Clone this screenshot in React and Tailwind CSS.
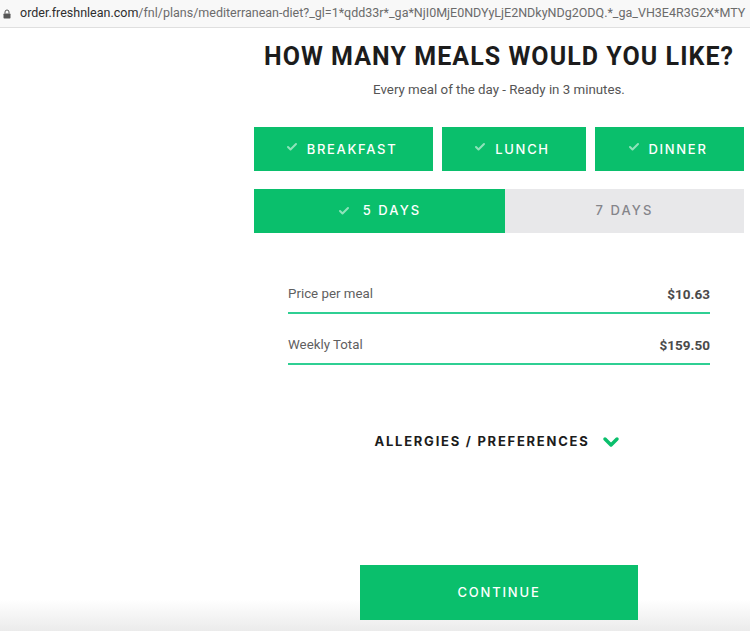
import { Check, ChevronDown } from "lucide-react";

const MealButton = ({ label, className }) => (
  <div className={`h-11 bg-[#0abf6c] flex items-center justify-center gap-[9px] pr-[4px] text-white text-[13px] font-medium tracking-[0.13em] font-['Inter',sans-serif] ${className}`}>
    <Check className="w-3 h-3 text-[#8fe3bb] -mt-1" strokeWidth={4} />
    <span className="mt-[1px]">{label}</span>
  </div>
);

const PriceRow = ({ label, value }) => (
  <div className="h-[31px] pt-[1px] flex items-start justify-between border-b-2 border-[#2fcf93]">
    <span className="text-[13.3px] leading-[20px] text-[#5f5f5f]">{label}</span>
    <span className="text-[13.5px] leading-[20px] font-bold text-[#4a4a4a]">{value}</span>
  </div>
);

export default function App() {
  return (
    <div className="w-[750px] h-[631px] overflow-hidden bg-gradient-to-b from-white from-[95%] to-[#ebebeb] flex flex-col font-['Roboto',sans-serif]">
      {/* URL BAR */}
      <div className="h-[28px] shrink-0 bg-[#f8f8f8] border-b border-[#dfdfdf] flex items-center pl-[3px] gap-[9px] whitespace-nowrap overflow-hidden text-[12.5px]">
        <svg viewBox="0 0 8 10" className="w-[8px] h-[10px] shrink-0">
          <path d="M2 4.5V3a2 2 0 0 1 4 0v1.5" fill="none" stroke="#555" strokeWidth="1" />
          <rect x="0.5" y="4.5" width="7" height="5" rx="0.8" fill="#555" />
        </svg>
        <span className="text-[#2e2e2e]">
          order.freshnlean.com<span className="text-[#6b6b6b]">/fnl/plans/mediterranean-diet?_gl=1*qdd33r*_ga*NjI0MjE0NDYyLjE2NDkyNDg2ODQ.*_ga_VH3E4R3G2X*MTY</span>
        </span>
      </div>

      {/* PLAN COLUMN */}
      <div className="ml-[254px] w-[490px] flex-1 flex flex-col">
        <h1 className="mt-[13px] text-center text-[25px] leading-[32px] font-bold text-[#1c1c1c] tracking-[0.042em] whitespace-nowrap">
          HOW MANY MEALS WOULD YOU LIKE?
        </h1>
        <p className="mt-[7px] text-center text-[13.3px] leading-[20px] text-[#555]">
          Every meal of the day - Ready in 3 minutes.
        </p>

        <div className="mt-[27px] flex gap-[9px]">
          <MealButton label="BREAKFAST" className="w-[179px]" />
          <MealButton label="LUNCH" className="w-[144px]" />
          <MealButton label="DINNER" className="w-[149px]" />
        </div>

        <div className="mt-[18px] flex h-11 font-['Inter',sans-serif] text-[13px] font-medium tracking-[0.16em]">
          <div className="w-[251px] bg-[#0abf6c] text-white flex items-center justify-center gap-[13px]">
            <Check className="w-3 h-3 text-[#8fe3bb]" strokeWidth={4} />
            <span>5 DAYS</span>
          </div>
          <div className="flex-1 bg-[#e8e8ea] text-[#85858a] flex items-center justify-center">7 DAYS</div>
        </div>

        <div className="mt-[50px] ml-[34px] w-[422px] flex flex-col gap-[20px]">
          <PriceRow label="Price per meal" value="$10.63" />
          <PriceRow label="Weekly Total" value="$159.50" />
        </div>

        <div className="mt-[65px] flex items-center justify-center gap-[10px] text-[13px] font-bold tracking-[0.135em] text-[#1c1c1c] font-['Inter',sans-serif]">
          <span>ALLERGIES / PREFERENCES</span>
          <ChevronDown className="w-6 h-6 text-[#0abf6c]" strokeWidth={3.5} />
        </div>

        <div className="mt-[111px] ml-[106px] w-[278px] h-[55px] bg-[#0abf6c] text-white flex items-center justify-center text-[13px] font-medium tracking-[0.14em] font-['Inter',sans-serif]">
          CONTINUE
        </div>
      </div>
    </div>
  );
}
